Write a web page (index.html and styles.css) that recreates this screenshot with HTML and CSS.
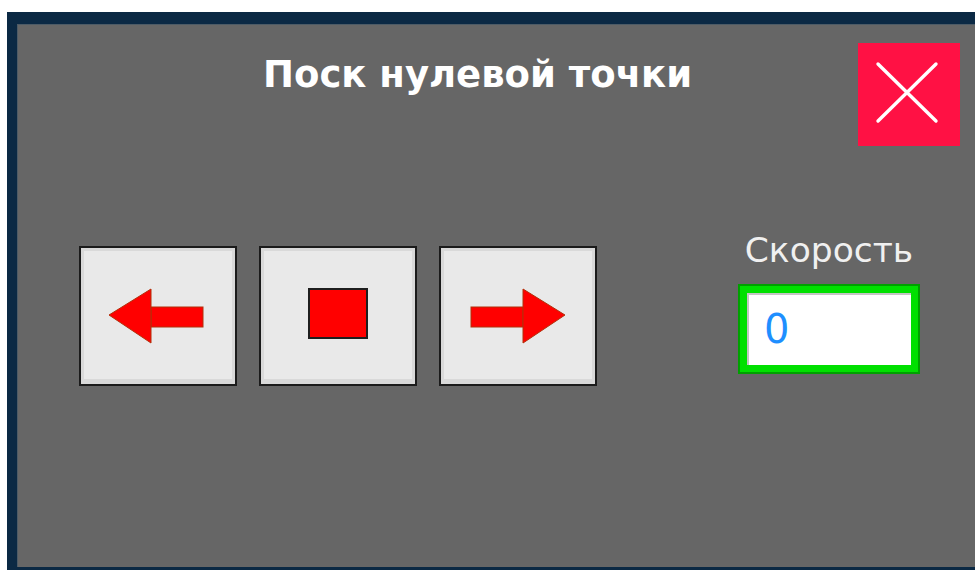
FILE: index.html
```html
<!DOCTYPE html>
<html lang="ru">
<head>
<meta charset="utf-8">
<title>Поиск нулевой точки</title>
<link rel="stylesheet" href="styles.css">
</head>
<body>
<div class="frame">
  <header class="head">
    <h1 class="title">Поск нулевой точки</h1>
    <button class="close" type="button" aria-label="Закрыть">
      <svg width="102" height="103" viewBox="0 0 102 103">
        <path d="M20 21 L78 78 M78 21 L20 78" stroke="#fff" stroke-width="3.4" stroke-linecap="round" fill="none"/>
      </svg>
    </button>
  </header>

  <main class="body">
    <div class="jog">
      <button class="key" type="button" aria-label="Влево">
        <svg class="arrow-left" width="96" height="56" viewBox="0 0 96 56">
          <rect x="43" y="19" width="52" height="20" fill="#ff0000" stroke="#b2300a" stroke-width="1"/>
          <polygon points="1,27 43,1 43,55" fill="#ff0000" stroke="#b2300a" stroke-width="1"/>
        </svg>
      </button>
      <button class="key" type="button" aria-label="Стоп">
        <svg class="stop" width="60" height="51" viewBox="0 0 60 51">
          <rect x="1" y="1" width="58" height="49" fill="#ff0000" stroke="#1e1e1e" stroke-width="2"/>
        </svg>
      </button>
      <button class="key" type="button" aria-label="Вправо">
        <svg class="arrow-right" width="96" height="56" viewBox="0 0 96 56">
          <rect x="1" y="19" width="52" height="20" fill="#ff0000" stroke="#b2300a" stroke-width="1"/>
          <polygon points="53,1 53,55 95,27" fill="#ff0000" stroke="#b2300a" stroke-width="1"/>
        </svg>
      </button>
    </div>

    <div class="speed">
      <div class="speed-label">Скорость</div>
      <div class="speed-field">0</div>
    </div>
  </main>
</div>
</body>
</html>
```

FILE: styles.css
```css
html, body {
  margin: 0;
  height: 100%;
  overflow: hidden;
  background: #ffffff;
}

/* navy window frame with grey work area; right edge runs off screen */
.frame {
  margin: 12px 0 0 7px;
  width: 958px;
  height: 543px;
  border-style: solid;
  border-color: #0b2944;
  border-width: 12px 10px 3px 10px;
  background: #666666;
  box-shadow: inset 1px 1px 0 #4d5b66;
  font-family: "DejaVu Sans", sans-serif;
}

.head {
  display: flex;
  align-items: flex-start;
  padding: 19px 15px 0 0;
}

.title {
  flex: 1;
  margin: 9px 0 0 0;
  padding-left: 246px;
  font-family: "DejaVu Sans", sans-serif;
  font-weight: bold;
  font-size: 37px;
  line-height: 46px;
  color: #ffffff;
}

.close {
  width: 102px;
  height: 103px;
  padding: 0;
  border: 0;
  background: #ff1144;
  display: block;
}

.close svg {
  display: block;
}

.body {
  display: flex;
  align-items: flex-start;
  padding: 84px 0 0 62px;
}

.jog {
  display: flex;
  gap: 22px;
  margin-top: 16px;
}

.key {
  width: 158px;
  height: 140px;
  box-sizing: border-box;
  padding: 0;
  border: 2px solid #1b1b1b;
  background: #e9e9e9;
  box-shadow: inset 0 0 0 3px #d9d9d9, inset 0 -5px 0 #d9d9d9;
  display: flex;
  align-items: center;
  justify-content: center;
}

.key svg {
  display: block;
}

.arrow-left {
  margin-left: -4px;
}

.stop {
  margin-top: -6px;
}

.speed {
  margin-left: 141px;
  width: 182px;
  display: flex;
  flex-direction: column;
  align-items: center;
}

.speed-label {
  font-size: 34.5px;
  line-height: 41px;
  color: #f0f0f0;
}

.speed-field {
  margin-top: 13px;
  width: 182px;
  height: 90px;
  box-sizing: border-box;
  border: 2px solid #00a000;
  background: #ffffff;
  box-shadow: inset 0 0 0 7px #00e000, inset 9px 9px 0 0 #c4c4c4;
  display: flex;
  align-items: center;
  padding-left: 24px;
  font-size: 40px;
  color: #1e8fff;
}
```
